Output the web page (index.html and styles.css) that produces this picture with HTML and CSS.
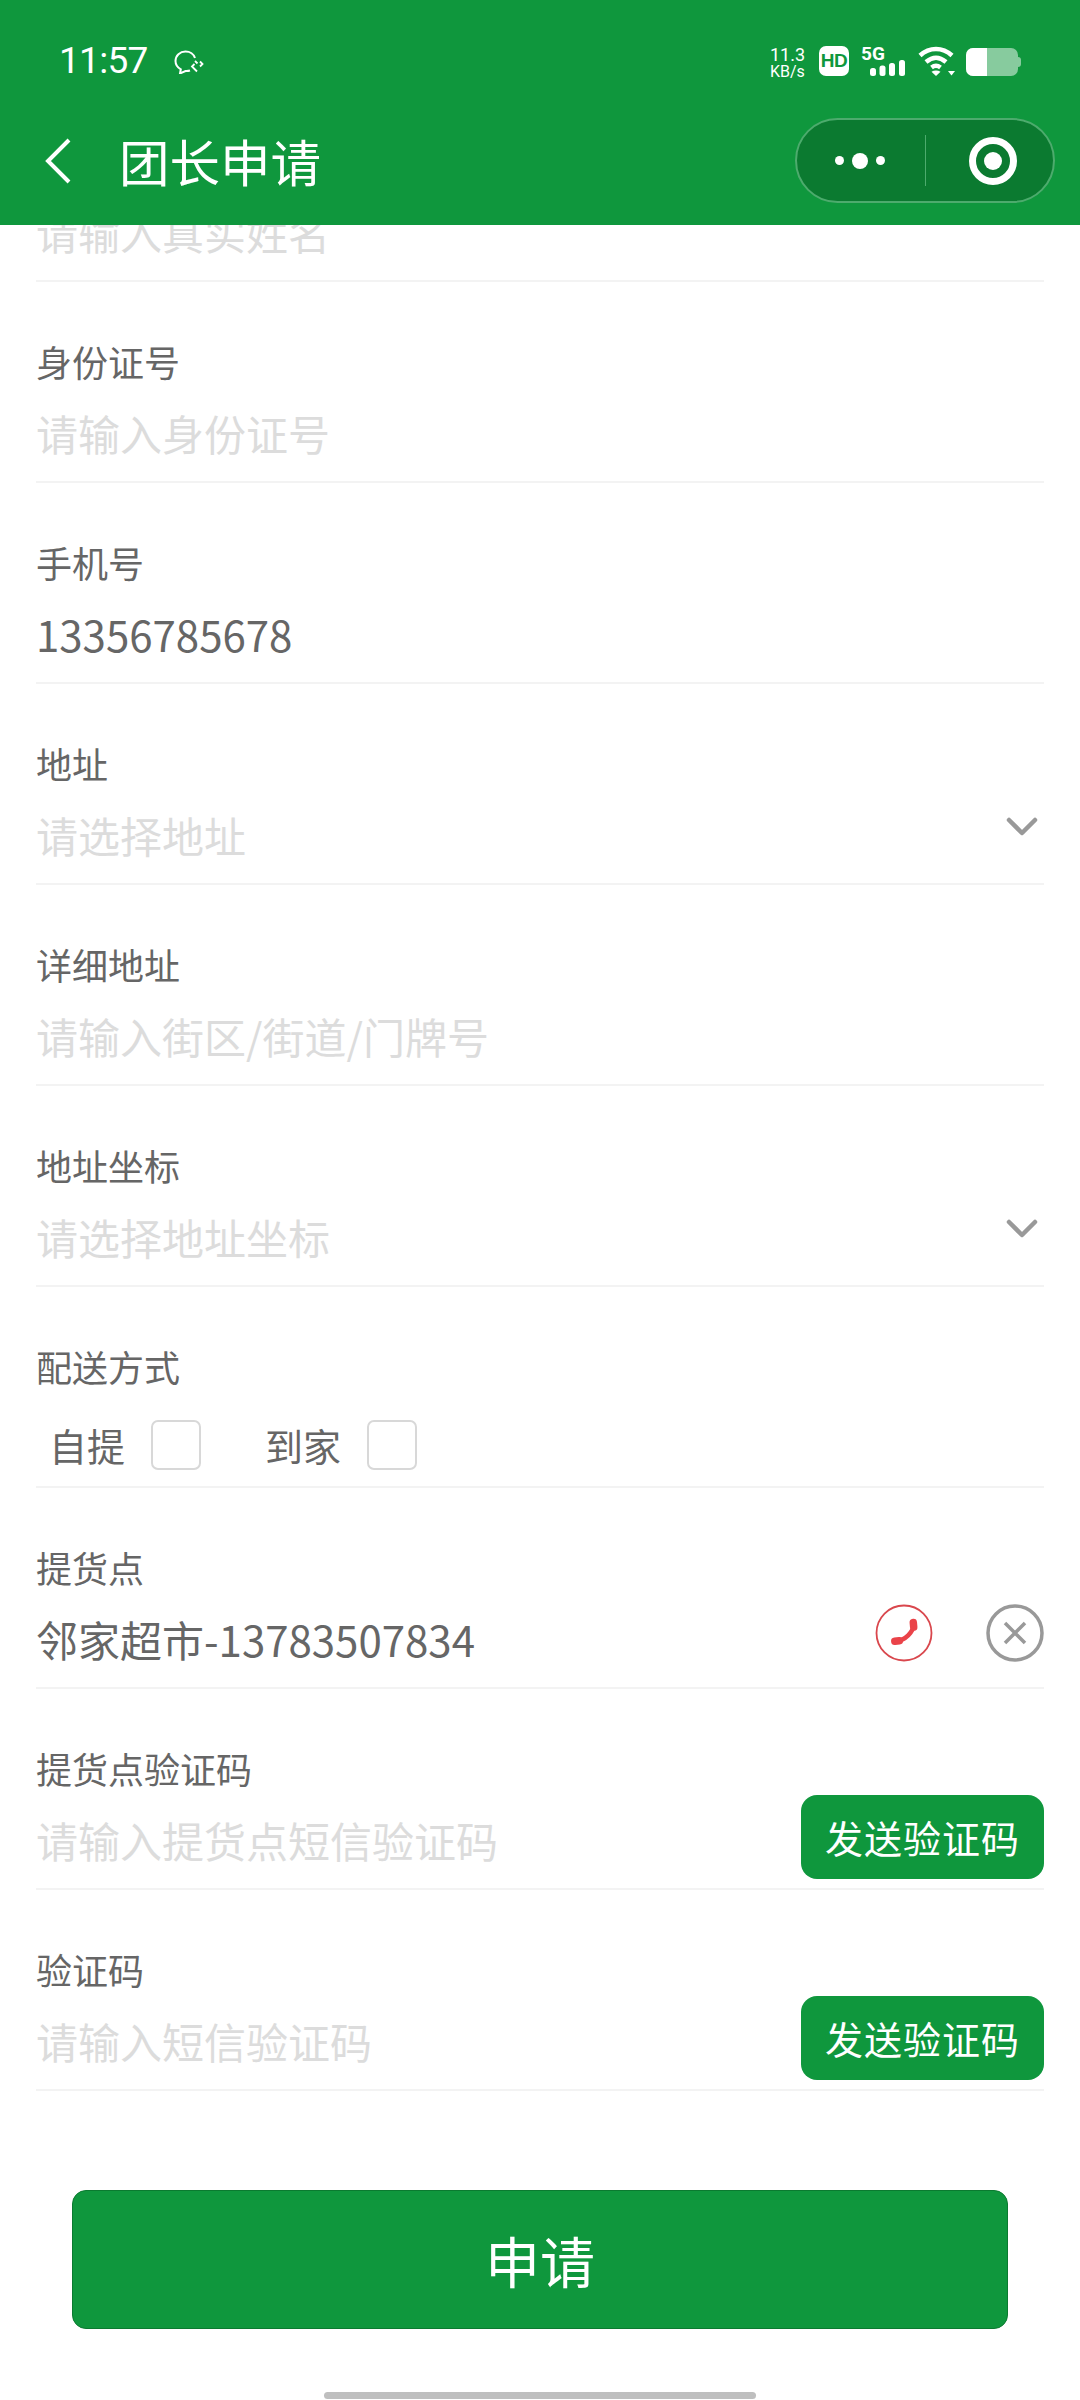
FILE: index.html
```html
<!DOCTYPE html>
<html lang="zh-CN">
<head>
<meta charset="utf-8">
<title>团长申请</title>
<link rel="stylesheet" href="styles.css">
</head>
<body>
<div class="page">
  <header class="header">
    <div class="status">
      <span class="time">11:57</span>
      <svg class="wechat" viewBox="0 0 30 24" fill="none" stroke="#fff" stroke-width="2">
        <path d="M16 20.500c-1.500.500-3 .6-4.500.5L6 23.500l.8-4.200C3.500 17.500 1.500 14.500 1.500 11 1.500 5.500 6 1.500 11.500 1.500c4.500 0 8.300 2.700 9.500 6.500"/>
        <path d="M21 11l2.500 2.500M26 11.500l2.500 2.500-2.500 2.500M23 21.500l-2.500-2.500-2.500-2.500 2.500-2.500" stroke-width="1.800"/>
      </svg>
      <div class="status-right">
        <div class="speed"><span class="speed-num">11.3</span><span class="speed-unit">KB/s</span></div>
        <span class="hd">HD</span>
        <div class="signal">
          <span class="five-g">5G</span>
          <svg class="bars" viewBox="0 0 35 16" fill="#fff">
            <rect x="0" y="8" width="6" height="8" rx="2.500"/>
            <rect x="9.500" y="5.500" width="6" height="10.500" rx="2.500"/>
            <rect x="19" y="3" width="6" height="13" rx="2.500"/>
            <rect x="29" y="0" width="6" height="16" rx="2.500"/>
          </svg>
        </div>
        <svg class="wifi" viewBox="0 0 38 30" fill="none" stroke="#fff" stroke-width="4.500">
          <path d="M2 9.500C11.500 .8 24.500 .8 34 9.500"/>
          <path d="M8 16c6.500-5.500 13.500-5.500 20 0"/>
          <path d="M13.500 21.500c3-2.300 6-2.300 9 0"/>
          <path d="M18 30l-4.500-4.200c2.800-1.800 6.200-1.800 9 0z" fill="#fff" stroke="none"/>
          <path d="M30 25h7l-3.500 4.500z" fill="#fff" stroke="none"/>
        </svg>
        <div class="battery"><span class="battery-level"></span></div>
      </div>
    </div>
    <div class="nav">
      <svg class="back" viewBox="0 0 26 46" fill="none" stroke="#fff" stroke-width="4">
        <path d="M24 2L3 23l21 21"/>
      </svg>
      <h1 class="title">团长申请</h1>
      <div class="capsule">
        <div class="capsule-more"><i class="dot"></i><i class="dot dot-big"></i><i class="dot"></i></div>
        <div class="capsule-line"></div>
        <div class="capsule-close"><span class="target"></span></div>
      </div>
    </div>
  </header>

  <main class="form">
    <div class="field field-first">
      <div class="control"><span class="placeholder">请输入真实姓名</span></div>
    </div>
    <div class="field">
      <div class="label">身份证号</div>
      <div class="control"><span class="placeholder">请输入身份证号</span></div>
    </div>
    <div class="field">
      <div class="label">手机号</div>
      <div class="control"><span class="value">13356785678</span></div>
    </div>
    <div class="field">
      <div class="label">地址</div>
      <div class="control">
        <span class="placeholder">请选择地址</span>
        <svg class="chevron" viewBox="0 0 32 20" fill="none" stroke="#999" stroke-width="4.500" stroke-linecap="round" stroke-linejoin="round"><path d="M3 3l13 13L29 3"/></svg>
      </div>
    </div>
    <div class="field">
      <div class="label">详细地址</div>
      <div class="control"><span class="placeholder">请输入街区/街道/门牌号</span></div>
    </div>
    <div class="field">
      <div class="label">地址坐标</div>
      <div class="control">
        <span class="placeholder">请选择地址坐标</span>
        <svg class="chevron" viewBox="0 0 32 20" fill="none" stroke="#999" stroke-width="4.500" stroke-linecap="round" stroke-linejoin="round"><path d="M3 3l13 13L29 3"/></svg>
      </div>
    </div>
    <div class="field">
      <div class="label">配送方式</div>
      <div class="control control-options">
        <label class="option"><span class="option-text">自提</span><span class="checkbox"></span></label>
        <label class="option"><span class="option-text">到家</span><span class="checkbox"></span></label>
      </div>
    </div>
    <div class="field">
      <div class="label">提货点</div>
      <div class="control">
        <span class="value">邻家超市-13783507834</span>
        <svg class="circle-icon circle-phone" viewBox="0 0 58 58" fill="none">
          <circle cx="29" cy="29" r="27.500" stroke="#d9474d" stroke-width="1.800"/>
          <path d="M38.500 20.500C38.500 28 30 36.500 21.500 37" stroke="#ea4349" stroke-width="4.500" stroke-linecap="round"/>
          <path d="M38.300 18.500l.4 4.500M19.800 37.300l4.500-.6" stroke="#ea4349" stroke-width="7.500" stroke-linecap="round"/>
        </svg>
        <svg class="circle-icon circle-close" viewBox="0 0 58 58" fill="none" stroke="#999">
          <circle cx="29" cy="29" r="27" stroke-width="3.500"/>
          <path d="M19 19l20 20M39 19L19 39" stroke-width="3.500"/>
        </svg>
      </div>
    </div>
    <div class="field">
      <div class="label">提货点验证码</div>
      <div class="control">
        <span class="placeholder">请输入提货点短信验证码</span>
        <button class="send" type="button">发送验证码</button>
      </div>
    </div>
    <div class="field">
      <div class="label">验证码</div>
      <div class="control">
        <span class="placeholder">请输入短信验证码</span>
        <button class="send" type="button">发送验证码</button>
      </div>
    </div>
  </main>

  <button class="submit" type="button">申请</button>
  <div class="home-bar"></div>
</div>
</body>
</html>
```

FILE: styles.css
```css
* { box-sizing: border-box; }

html, body {
  margin: 0;
  padding: 0;
  background: #fff;
}

body {
  font-family: "Noto Sans CJK SC", "Noto Sans", sans-serif;
  color: #666;
}

.page {
  width: 1080px;
  height: 2400px;
  display: flex;
  flex-direction: column;
  overflow: hidden;
}

/* Header */
.header {
  height: 225px;
  flex: none;
  background: #0f973d;
  color: #fff;
}

.status {
  height: 118px;
  display: flex;
  align-items: flex-start;
  padding: 42px 59px 0 59px;
}

.time {
  font-family: Roboto, sans-serif;
  font-size: 37px;
  line-height: 38px;
  letter-spacing: -0.7px;
  width: 115px;
  flex: none;
}

.wechat {
  width: 30px;
  height: 24px;
  margin-top: 8px;
  flex: none;
}

.status-right {
  margin-left: auto;
  display: flex;
  align-items: flex-start;
  margin-top: 4px;
}

.speed {
  width: 49px;
  flex: none;
  display: flex;
  flex-direction: column;
  font-family: Roboto, sans-serif;
  line-height: 17px;
  color: #fff;
}

.speed-num { font-size: 18px; }
.speed-unit { font-size: 16px; }

.hd {
  width: 30px;
  height: 30px;
  background: #fff;
  border-radius: 7px;
  color: #0f973d;
  font-family: "Liberation Sans", sans-serif;
  font-weight: 700;
  font-size: 19px;
  line-height: 30px;
  text-align: center;
  letter-spacing: -0.5px;
  flex: none;
}

.signal {
  width: 44px;
  height: 30px;
  margin-left: 12px;
  position: relative;
  flex: none;
}

.five-g {
  position: absolute;
  left: 0;
  top: -1px;
  font-family: Roboto, sans-serif;
  font-weight: 700;
  font-size: 19px;
  line-height: 17px;
}

.bars {
  position: absolute;
  left: 9px;
  top: 14px;
  width: 35px;
  height: 16px;
}

.wifi {
  width: 38px;
  height: 30px;
  margin-left: 13px;
  flex: none;
}

.battery {
  width: 52px;
  height: 28px;
  margin-left: 10px;
  margin-top: 2px;
  margin-right: 3px;
  border-radius: 7px;
  background: rgba(255, 255, 255, 0.5);
  position: relative;
  flex: none;
}

.battery::after {
  content: "";
  position: absolute;
  right: -3px;
  top: 9px;
  width: 3px;
  height: 10px;
  border-radius: 0 3px 3px 0;
  background: rgba(255, 255, 255, 0.5);
}

.battery-level {
  display: block;
  width: 21px;
  height: 28px;
  background: #fff;
  border-radius: 7px 0 0 7px;
}

.nav {
  height: 107px;
  display: flex;
  align-items: center;
  padding: 0 25px 18px 45px;
}

.back {
  width: 26px;
  height: 46px;
  flex: none;
  margin-top: -4px;
}

.title {
  margin: -6px 0 0 48px;
  font-weight: 400;
  font-size: 50.5px;
  line-height: 60px;
  color: #fff;
}

.capsule {
  margin-left: auto;
  margin-top: -4px;
  width: 260px;
  height: 85px;
  border-radius: 43px;
  border: 2px solid #4dab6d;
  background: #0b7a30;
  display: flex;
  align-items: center;
  flex: none;
}

.capsule-more {
  width: 128px;
  display: flex;
  justify-content: center;
  align-items: center;
  gap: 8px;
  padding-right: 2px;
}

.dot {
  display: block;
  width: 9px;
  height: 9px;
  border-radius: 50%;
  background: #fff;
}

.dot-big {
  width: 16px;
  height: 16px;
}

.capsule-line {
  width: 1px;
  height: 51px;
  background: #4dab6d;
}

.capsule-close {
  flex: 1;
  display: flex;
  justify-content: center;
  padding-left: 6px;
}

.target {
  width: 48px;
  height: 48px;
  border-radius: 50%;
  border: 7px solid #fff;
  display: flex;
  align-items: center;
  justify-content: center;
}

.target::before {
  content: "";
  width: 18px;
  height: 18px;
  border-radius: 50%;
  background: #fff;
}

/* Form */
.form {
  flex: none;
  height: 1866px;
  padding: 0 36px;
  overflow: hidden;
}

.field {
  display: flow-root;
  height: 201px;
  padding-top: 57px;
  border-bottom: 2px solid #f3f3f3;
}

.field-first {
  height: 57px;
  padding-top: 0;
}

.field-first .control {
  margin-top: -21px;
}

.label {
  font-size: 36px;
  line-height: 44px;
  color: #666;
}

.control {
  margin-top: 22px;
  height: 56px;
  display: flex;
  align-items: center;
  justify-content: space-between;
}

.placeholder,
.value {
  font-size: 42px;
  line-height: 56px;
  white-space: nowrap;
}

.placeholder { color: #dcdcdc; }
.value { color: #666; }

.chevron {
  width: 32px;
  height: 20px;
  margin-right: 6px;
  margin-bottom: 16px;
  flex: none;
}

.control-options {
  justify-content: flex-start;
  gap: 64px;
  padding-left: 13px;
  margin-top: 29px;
}

.option {
  display: flex;
  align-items: center;
  gap: 26px;
}

.option-text {
  font-size: 38px;
  line-height: 50px;
  color: #666;
}

.checkbox {
  display: block;
  width: 50px;
  height: 50px;
  border: 2px solid #d8d8d8;
  border-radius: 7px;
  background: #fff;
}

.circle-icon {
  width: 58px;
  height: 58px;
  flex: none;
  margin-bottom: 12px;
}

.circle-phone {
  margin-left: auto;
}

.circle-close {
  margin-left: 53px;
}

.send {
  flex: none;
  width: 243px;
  height: 84px;
  margin-bottom: 6px;
  padding: 0;
  border: 0;
  border-radius: 16px;
  background: #0f973d;
  color: #fff;
  font-family: inherit;
  font-size: 38px;
  letter-spacing: 1px;
  line-height: 84px;
}

/* Footer */
.submit {
  flex: none;
  margin: 99px 72px 0;
  width: 936px;
  height: 139px;
  padding: 0;
  border: 1px solid #0b7a30;
  border-radius: 14px;
  background: #0f973d;
  color: #fff;
  font-family: inherit;
  font-size: 55px;
  line-height: 137px;
}

.home-bar {
  flex: none;
  width: 432px;
  height: 7px;
  margin: 63px auto 0;
  border-radius: 4px;
  background: #bfbfbf;
}
```
